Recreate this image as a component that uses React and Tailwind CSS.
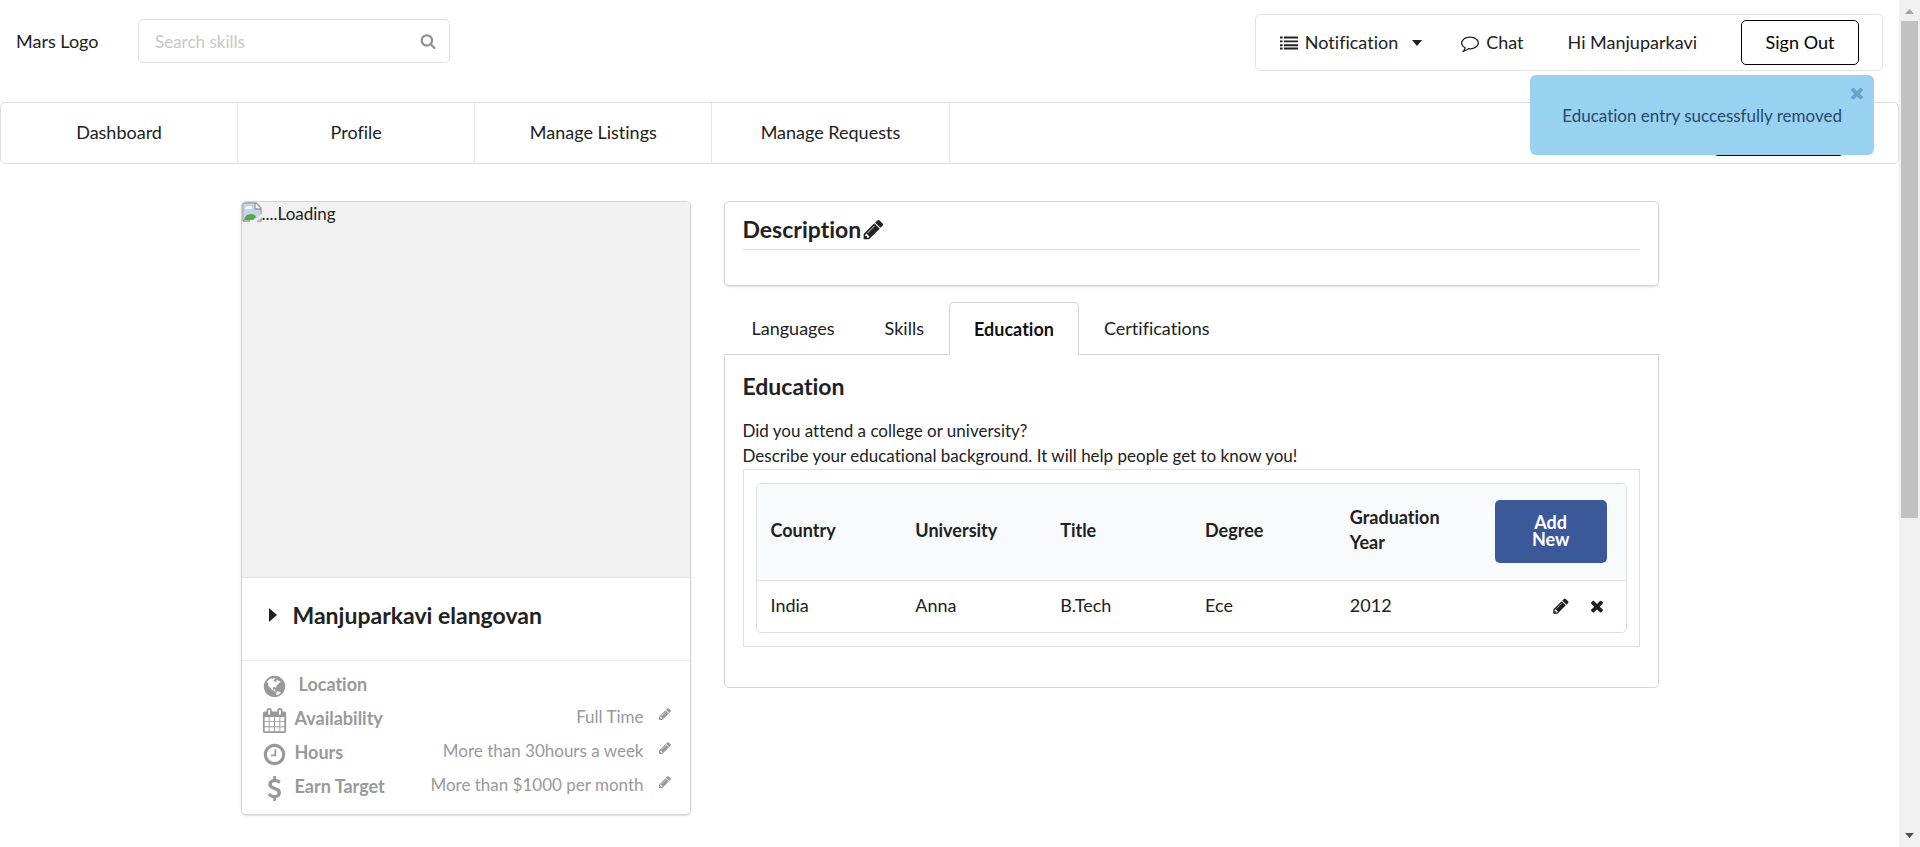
import React from "react";

const ICONS = {
  pencil:
    "M491 1536l91-91-235-235-91 91v107h128v128h107zm523-928q0-22-22-22-10 0-17 7l-542 542q-7 7-7 17 0 22 22 22 10 0 17-7l542-542q7-7 7-17zm-54-192l416 416-832 832h-416v-416zm683 96q0 53-37 90l-166 166-416-416 166-165q36-38 90-38 53 0 91 38l235 234q37 39 37 91z",
  close:
    "M1490 1322q0 40-28 68l-136 136q-28 28-68 28t-68-28l-294-294-294 294q-28 28-68 28t-68-28l-136-136q-28-28-28-68t28-68l294-294-294-294q-28-28-28-68t28-68l136-136q28-28 68-28t68 28l294 294 294-294q28-28 68-28t68 28l136 136q28 28 28 68t-28 68l-294 294 294 294q28 28 28 68z",
  search:
    "M1216 832q0-185-131.5-316.5t-316.5-131.5-316.5 131.5-131.5 316.5 131.5 316.5 316.5 131.5 316.5-131.5 131.5-316.5zm512 832q0 52-38 90t-90 38q-54 0-90-38l-343-342q-179 124-399 124-143 0-273.5-55.5t-225-150-150-225-55.5-273.5 55.5-273.5 150-225 225-150 273.5-55.5 273.5 55.5 225 150 150 225 55.5 273.5q0 220-124 399l343 343q37 37 37 90z",
  calendar:
    "M192 1664h288v-288h-288v288zm352 0h320v-288h-320v288zm-352-352h288v-320h-288v320zm352 0h320v-320h-320v320zm-352-384h288v-288h-288v288zm736 736h320v-288h-320v288zm-384-736h320v-288h-320v288zm768 736h288v-288h-288v288zm-384-352h320v-320h-320v320zm-352-864v-288q0-13-9.5-22.5t-22.5-9.5h-64q-13 0-22.5 9.5t-9.5 22.5v288q0 13 9.5 22.5t22.5 9.5h64q13 0 22.5-9.5t9.5-22.5zm736 864h288v-320h-288v320zm-384-384h320v-288h-320v288zm384 0h288v-288h-288v288zm32-480v-288q0-13-9.5-22.5t-22.5-9.5h-64q-13 0-22.5 9.5t-9.5 22.5v288q0 13 9.5 22.5t22.5 9.5h64q13 0 22.5-9.5t9.5-22.5zm384-64v1280q0 52-38 90t-90 38h-1408q-52 0-90-38t-38-90v-1280q0-52 38-90t90-38h128v-96q0-66 47-113t113-47h64q66 0 113 47t47 113v96h384v-96q0-66 47-113t113-47h64q66 0 113 47t47 113v96h128q52 0 90 38t38 90z",
  clock:
    "M1024 544v448q0 14-9 23t-23 9h-320q-14 0-23-9t-9-23v-64q0-14 9-23t23-9h224v-352q0-14 9-23t23-9h64q14 0 23 9t9 23zm416 352q0-148-73-273t-198-198-273-73-273 73-198 198-73 273 73 273 198 198 273 73 273-73 198-198 73-273zm224 0q0 209-103 385.5t-279.5 279.5-385.5 103-385.5-103-279.5-279.5-103-385.5 103-385.5 279.5-279.5 385.5-103 385.5 103 279.5 279.5 103 385.5z",
  comment:
    "M896 384q-204 0-381.5 69.5t-282 187.5-104.5 255q0 112 71.5 213.5t201.5 175.5l87 50-27 96q-24 91-70 172 152-63 275-171l43-38 57 6q69 8 130 8 204 0 381.5-69.5t282-187.5 104.5-255-104.5-255-282-187.5-381.5-69.5zm896 512q0 174-120 321.5t-326 233-450 85.5q-70 0-145-8-198 175-460 242-49 14-114 22h-5q-15 0-27-10.5t-16-27.5v-1q-3-4-.5-12t2-10 4.5-9.5l6-9 7-8.5 8-9q7-8 31-34.5t34.5-38 31-39.5 32.5-51 27-59 26-76q-157-89-247.5-220t-90.5-281q0-130 71-248.5t191-204.5 286-136.5 348-50.5 348 50.5 286 136.5 191 204.5 71 248.5z",
  dollar:
    "M1362 1185q0 153-99.5 263.5t-258.5 136.5v175q0 14-9 23t-23 9h-135q-13 0-22.5-9.5t-9.5-22.5v-175q-66-9-127.5-31t-101.5-44.5-74-48-46.5-37.5-17.5-18q-17-21-2-41l103-135q7-10 23-12 15-2 24 9l2 2q113 99 243 125 37 8 74 8 81 0 142.5-43t61.5-122q0-28-15-53t-33.5-42-58.5-37.5-66-32-80-32.5q-39-16-61.5-25t-61.5-26.5-62.5-31-56.5-35.5-53.5-42.5-43.5-49-35.5-58-21-66.5-8.5-78q0-138 98-242t255-134v-180q0-13 9.5-22.5t22.5-9.5h135q14 0 23 9t9 23v176q57 6 110.5 23t87 33.5 63.5 37.5 39 29 15 14q17 18 5 38l-81 146q-8 15-23 16-14 3-27-7-3-3-14.5-12t-39-26.5-58.5-32-74.5-26-85.5-11.5q-95 0-155 43t-60 111q0 26 8.5 48t29.5 41.5 39.5 33 56 31 60.5 27 70 27.5q53 20 81 31.5t76 35 75.5 42.5 62 50 53 63.5 31.5 76.5 13 94z",
  list:
    "M0 1344h256v192H0zM0 1024h256v192H0zM0 640h256v192H0zM0 256h256v192H0zM384 1344h1408v192H384zM384 1024h1408v192H384zM384 640h1408v192H384zM384 256h1408v192H384z",
  globe:
    "M896 128q209 0 385.5 103t279.5 279.5 103 385.5-103 385.5-279.5 279.5-385.5 103-385.5-103-279.5-279.5-103-385.5 103-385.5 279.5-279.5 385.5-103zm274 521q-2 1-9.5 9.5t-13.5 9.5q2 0 4.5-5t5-11 3.5-7q6-7 22-15 14-6 52-12 34-8 51 11-2-2 9.5-13t14.5-12q3-2 15-4.5t15-7.5l2-22q-12 1-17.5-7t-6.5-21q0 2-6 8 0-7-4.5-8t-11.5 1-9 1q-10-3-15-7.5t-8-16.5-4-15q-2-5-9.5-11t-9.5-10q-1-2-2.5-5.5t-3-6.5-4-5.5-5.5-2.5-7 5-7.5 10-4.5 5q-3-2-6-1.5t-4.5 1-4.5 3-5 3.5q-3 2-8.5 3t-8.5 2q15-5-1-11-10-4-16-3 9-4 7.5-12t-8.5-14h5q-1-4-8.5-8.5t-17.5-8.5-13-6q-8-5-34-9.5t-33-.5q-5 6-4.5 10.5t4 14 3.5 12.5q1 6-5.5 13t-6.5 12q0 7 14 15.500t10 21.500q-3 8-16 16t-16 12q-5 8-1.500 18.500t10.500 16.500q2 2 1.500 4t-3.500 4.500-5.500 4-6.500 3.500l-3 2q-11 5-20.500-6t-13.500-26q-7-25-16-30-23-8-29 1-5-13-41-26-25-9-58-4 6-1 0-15-7-15-19-12 3-6 4-17.500t1-13.500q3-13 12-23 1-1 7-8.500t9.500-13.500.5-6q35 4 50-11 5-5 11.500-17t10.500-17q9-6 14-5.500t14.500 5.500 14.500 5q14 1 15.500-11t-7.500-20q12 1 3-17-5-7-8-9-12-4-27 5-8 4 2 8-1-1-9.500 10.500t-16.500 17.500-16-5q-1-1-5.500-13.500t-9.500-13.500q-8 0-16 15 3-8-11-15t-24-8q19-12-8-27-7-4-20.500-5t-19.500 4q-5 7-5.500 11.500t5 8 10.500 5.500 11.500 4 8.500 3q14 10 8 14-2 1-8.500 3.500t-11.500 4.500-6 4q-3 4 0 14t-2 14q-5-5-9-17.500t-7-16.500q7 9-25 6l-10-1q-4 0-16 2t-20.500 1-13.500-8q-4-8 0-20 1-4 4-2-4-3-11-9.500t-10-8.500q-46 15-94 41 6 1 12-1 5-2 13-6.500t10-5.500q34-14 42-7l5-5q14 16 20 25-7-4-30-1-20 6-22 12 7 12 5 18-4-3-11.500-10t-14.500-11-15-5q-16 0-22 1-146 80-235 222 7 7 12 8 4 1 5 9t2.500 11 11.500-3q9 8 3 19 1-1 44 27 19 17 21 21 3 11-10 18-1-2-9-9t-9-4q-3 5 .5 18.500t10.500 12.500q-7 0-9.500 16t-2.500 35.500-1 23.500l2 1q-3 12 5.500 34.500t21.500 19.500q-13 3 20 43 6 8 8 9 3 2 12 7.500t15 10 10 10.500q4 5 10 22.500t14 23.500q-2 6 9.500 20t10.500 23q-1 0-2.500 1t-2.500 1q3 7 15.500 14t15.500 13q1 3 2 10t3 11 8 2q2-20-24-62-15-25-17-29-3-5-5.500-15.500t-4.500-14.500q2 0 6 1.500t8.500 3.500 7.500 4 2 3q-3 7 2 17.500t12 18.500 17 19 12 13q6 6 14 19.500t0 13.500q9 0 20 10.500t17 19.500q5 8 8 26t5 24q2 7 8.500 13.500t12.500 9.500l16 8 13 7q5 2 18.500 10.500t21.500 11.500q10 4 16 4t14.500-2.500 13.500-3.500q15-2 29 15t21 21q36 19 55 11-2 1 .5 7.500t8 15.500 9 14.500 5.500 8.500q5 6 18 15t18 15q6-4 7-9-3 8 7 20t18 10q14-3 14-32-31 15-49-18 0-1-2.500-5.500t-4-8.500-2.500-8.500 0-7.500 5-3q9 0 10-3.500t-2-12.500-4-13q-1-8-11-20t-12-15q-5 9-16 8t-16-9q0 1-1.500 5.500t-1.500 6.500q-13 0-15-1 1-3 2.500-17.500t3.500-22.500q1-4 5.500-12t7.500-14.500 4-12.500-4.500-9.500-17.500-2.500q-19 1-26 20-1 3-3 10.500t-5 11.500-9 7q-7 3-24 2t-24-5q-13-8-22.500-29t-9.500-37q0-10 2.500-26.500t3-25-5.500-24.500q3-2 9-9.500t10-10.500q2-1 4.500-1.500t4.500 0 4-1.500 3-6q-1-1-4-3-3-3-4-3 7 3 28.500-1.500t27.500 1.500q15 11 22-2 0-1-2.500-9.500t-.5-13.500q5 27 29 9 3 3 15.500 5t17.500 5q3 2 7 5.500t5.500 4.500 5-.5 8.500-6.500q10 14 12 24 11 40 19 44 7 3 11 2t4.500-9.500 0-14-1.500-12.500l-1-8v-18l-1-8q-15-3-18.500-12t1.500-18.500 15-18.500q1-1 8-3.500t15.500-6.500 12.500-8q21-19 15-35 7 0 11-9-1 0-5-3t-7.500-5-4.500-2q9-5 2-16 5-3 7.500-11t7.500-10q9 12 21 2 7-8 1-16 5-7 20.500-10.500t18.500-9.500q7 2 8-2t1-12 3-12q4-5 15-9t13-5l17-11q3-4 0-4 18 2 31-11 10-11-6-20 3-6-3-9.500t-15-5.500q3-1 11.500-.5t10.500-1.500q15-10-7-16-17-5-43 12zm-163 877q206-36 351-189-3-3-12.500-4.500t-12.500-3.500q-18-7-24-8 1-7-2.500-13t-8-9-12.500-8-11-7q-2-2-7-6t-7-5.500-7.500-4.500-8.500-2-10 1l-3 1q-3 1-5.500 2.500t-5.500 3-4 3 0 2.500q-21-17-36-22-5-1-11-5.500t-10.500-7-10-1.500-11.500 7q-5 5-6 15t-2 13q-7-5 0-17.500t2-18.500q-3-6-10.500-4.500t-12 4.500-11.500 8.500-9 6.500-8.500 5.500-8.500 7.500q-3 4-6 12t-5 11q-2-4-11.500-6.500t-9.500-5.500q2 10 4 35t5 38q7 31-12 48-27 25-29 40-4 22 12 26 0 7-8 20.500t-7 21.500q0 6 2 16z",
};

function Icon({ name, className }) {
  return (
    <svg viewBox="0 0 1792 1792" fill="currentColor" aria-hidden="true" className={"shrink-0 " + className}>
      <path d={ICONS[name]} />
    </svg>
  );
}

function BrokenImage() {
  return (
    <svg viewBox="0 0 20 20" className="h-5 w-5 shrink-0" aria-hidden="true">
      <path d="M1 1h13l5 5v13H1z" fill="#fff" />
      <path d="M2 2h11v5h5v11H2z" fill="#c3d4f5" />
      <path d="M3 7q0-2 2-2 1-2 3-1 2 0 2 3z" fill="#fff" />
      <path d="M2 18q1-6 7-6 4 0 5 3l-3 3z" fill="#4fae35" />
      <path d="M1 19V1h13l5 5v7M1 19h7M13 1v6h6M15 19h4v-4" fill="none" stroke="#9b9b9b" strokeWidth="1.3" />
      <path d="M9 20l11-8v3l-6 5z" fill="#f1f1f1" />
    </svg>
  );
}

const NAV = ["Dashboard", "Profile", "Manage Listings", "Manage Requests"];

const DETAILS = [
  { icon: "globe", label: "Location", gap: "pl-1", value: "" },
  { icon: "calendar", label: "Availability", gap: "", value: "Full Time" },
  { icon: "clock", label: "Hours", gap: "", value: "More than 30hours a week" },
  { icon: "dollar", label: "Earn Target", gap: "", value: "More than $1000 per month" },
];

const COLUMNS = ["Country", "University", "Title", "Degree", "Graduation Year"];
const ROW = ["India", "Anna", "B.Tech", "Ece", "2012"];

function Header() {
  return (
    <header className="flex items-start justify-between pt-[14px] pr-4 pl-4">
      <div className="flex items-center pt-[5px]">
        <a href="#home" className="w-[122px]">Mars Logo</a>
        <label className="flex h-[44px] w-[312px] items-center rounded-[5px] border border-[#dededf] pr-[13px] pl-4">
          <input
            type="text"
            aria-label="Search skills"
            placeholder="Search skills"
            className="min-w-0 flex-1 text-[17px] outline-none placeholder:text-[#c7c7c7]"
          />
          <Icon name="search" className="h-4 w-4 text-[#929292]" />
        </label>
      </div>
      <div className="flex h-[57px] items-center rounded-[5px] border border-[#e2e2e3] pr-[23px] pl-6">
        <button type="button" className="flex items-center">
          <Icon name="list" className="mr-[7px] h-[18px] w-[18px]" />
          Notification
          <svg viewBox="0 0 10 6" className="ml-[14px] h-[6px] w-[10px]" fill="currentColor" aria-hidden="true">
            <path d="M0 0h10L5 6z" />
          </svg>
        </button>
        <a href="#chat" className="ml-[39px] flex items-center">
          <Icon name="comment" className="mr-[7px] h-[18px] w-[18px]" />
          Chat
        </a>
        <span className="ml-11">Hi Manjuparkavi</span>
        <button type="button" className="ml-11 h-[45px] w-[118px] rounded-[5px] border border-black text-black">
          Sign Out
        </button>
      </div>
    </header>
  );
}

function Navigation() {
  return (
    <nav className="mt-[31px] flex h-[62px] items-center justify-between rounded-[5px] border border-[#dededf]">
      <div className="flex h-full w-1/2">
        {NAV.map((item) => (
          <a
            key={item}
            href={"#" + item.toLowerCase().replace(" ", "-")}
            className="flex flex-1 items-center justify-center border-r border-[#e6e6e6] pb-[2px]"
          >
            {item}
          </a>
        ))}
      </div>
      <span className="mr-[54px] h-[46px] w-[131px] rounded-[5px] border border-black" />
    </nav>
  );
}

function ProfileCard() {
  return (
    <section className="w-[450px] shrink-0 self-start overflow-hidden rounded-[5px] border border-[#d4d4d5] shadow-[0_1px_2px_0_rgba(34,36,38,0.15)]">
      <div className="flex h-[376px] items-start border-b border-[#e3e3e3] bg-[#f1f1f1]">
        <BrokenImage />
        <span className="text-[17px] leading-6">....Loading</span>
      </div>
      <h2 className="flex h-[83px] items-center border-b border-[#ececec] pb-2 pl-[27px] text-[23px] font-bold">
        <svg viewBox="0 0 8 14" className="mr-4 h-[14px] w-2" fill="currentColor" aria-hidden="true">
          <path d="M0 0l8 7-8 7z" />
        </svg>
        Manjuparkavi elangovan
      </h2>
      <ul className="pt-[6px] pb-[11px] text-[#999]">
        {DETAILS.map((d) => (
          <li key={d.label} className="flex h-[34px] items-center pr-[18px] pl-5">
            <Icon name={d.icon} className="mt-1 h-[25px] w-[25px]" />
            <strong className={"ml-2 flex-1 font-bold " + d.gap}>{d.label}</strong>
            {d.value && (
              <>
                <span className="mb-1 text-[17px]">{d.value}</span>
                <button type="button" aria-label={"Edit " + d.label} className="mb-2 ml-[14px]">
                  <Icon name="pencil" className="h-[14px] w-[14px]" />
                </button>
              </>
            )}
          </li>
        ))}
      </ul>
    </section>
  );
}

function Description() {
  return (
    <section className="h-[85px] rounded-[5px] border border-[#d4d4d5] px-[18px] pt-[13px] shadow-[0_1px_2px_0_rgba(34,36,38,0.15)]">
      <h3 className="flex items-center border-b border-[#dcdcdd] pb-[5px] text-[23px] leading-[29px] font-bold">
        Description
        <button type="button" aria-label="Edit description">
          <Icon name="pencil" className="ml-px h-[23px] w-[23px]" />
        </button>
      </h3>
    </section>
  );
}

function Tabs() {
  const tab = "h-[53px] px-[25px] ";
  return (
    <div role="tablist" className="flex h-[52px] pl-[3px]">
      <button type="button" role="tab" className={tab}>Languages</button>
      <button type="button" role="tab" className={tab}>Skills</button>
      <button
        type="button"
        role="tab"
        aria-selected="true"
        className="relative z-10 h-[53px] w-[130px] rounded-t-[5px] border border-b-0 border-[#d4d4d5] bg-white font-bold text-black/95"
      >
        Education
      </button>
      <button type="button" role="tab" className={tab}>Certifications</button>
    </div>
  );
}

function EducationPanel() {
  return (
    <section className="rounded-b-[5px] border border-[#d4d4d5] px-[18px] pt-[17px] pb-10">
      <h3 className="text-[23px] leading-[29px] font-bold">Education</h3>
      <p className="mt-[17px] pb-px text-[17px] leading-[25px]">
        Did you attend a college or university?
        <br />
        Describe your educational background. It will help people get to know you!
      </p>
      <div className="border border-[#e0e0e0] px-3 py-[13px]">
        <div className="overflow-hidden rounded-[5px] border border-[#dededf]">
          <table className="w-full table-fixed border-collapse text-left">
            <thead className="bg-[#f9fafb]">
              <tr className="h-24 border-b border-[#e1e2e3]">
                {COLUMNS.map((c) => (
                  <th key={c} className="px-[14px] pb-[3px] leading-[25px] font-bold">{c}</th>
                ))}
                <th className="px-[14px]">
                  <button
                    type="button"
                    className="block h-[63px] w-[112px] rounded-[5px] bg-[#3b5998] px-7 pb-[2px] leading-[17px] font-bold text-white"
                  >
                    Add New
                  </button>
                </th>
              </tr>
            </thead>
            <tbody>
              <tr className="h-[52px]">
                {ROW.map((c) => (
                  <td key={c} className="px-[14px] pb-[2px]">{c}</td>
                ))}
                <td className="px-5">
                  <div className="flex justify-end gap-[18px]">
                    <button type="button" aria-label="Edit education">
                      <Icon name="pencil" className="h-[18px] w-[18px]" />
                    </button>
                    <button type="button" aria-label="Remove education">
                      <Icon name="close" className="h-[18px] w-[18px]" />
                    </button>
                  </div>
                </td>
              </tr>
            </tbody>
          </table>
        </div>
      </div>
    </section>
  );
}

function Toast() {
  return (
    <div
      role="status"
      className="absolute top-[75px] right-[25px] z-20 flex h-20 items-center rounded-[6px] bg-[#98d2f0] px-8 text-[17px] text-[#28486a]"
    >
      Education entry successfully removed
      <button type="button" aria-label="Close" className="absolute top-[9px] right-2 text-[#65a5cc]">
        <Icon name="close" className="h-[18px] w-[18px]" />
      </button>
    </div>
  );
}

function Scrollbar() {
  return (
    <div aria-hidden="true" className="flex h-screen w-[21px] shrink-0 flex-col items-center bg-[#f0f0f0]">
      <svg viewBox="0 0 17 21" className="h-[21px] w-[17px] shrink-0">
        <path d="M4 14h9l-4.500-5z" fill="#a3a3a3" />
      </svg>
      <div className="h-[497px] w-[17px] bg-[#c1c1c1]" />
      <div className="flex-1" />
      <svg viewBox="0 0 17 21" className="h-[21px] w-[17px] shrink-0">
        <path d="M4 7h9l-4.500 5z" fill="#505050" />
      </svg>
    </div>
  );
}

export default function App() {
  return (
    <div className="flex h-screen overflow-hidden bg-white font-['Lato',sans-serif] text-[18px] leading-[25px] text-[#212121] [font-variant-ligatures:no-common-ligatures]">
      <div className="relative min-w-0 flex-1">
        <Header />
        <Navigation />
        <Toast />
        <main className="mx-auto mt-[37px] flex max-w-[1418px] gap-[33px]">
          <ProfileCard />
          <div className="min-w-0 flex-1">
            <Description />
            <div className="mt-4">
              <Tabs />
              <EducationPanel />
            </div>
          </div>
        </main>
      </div>
      <Scrollbar />
    </div>
  );
}
